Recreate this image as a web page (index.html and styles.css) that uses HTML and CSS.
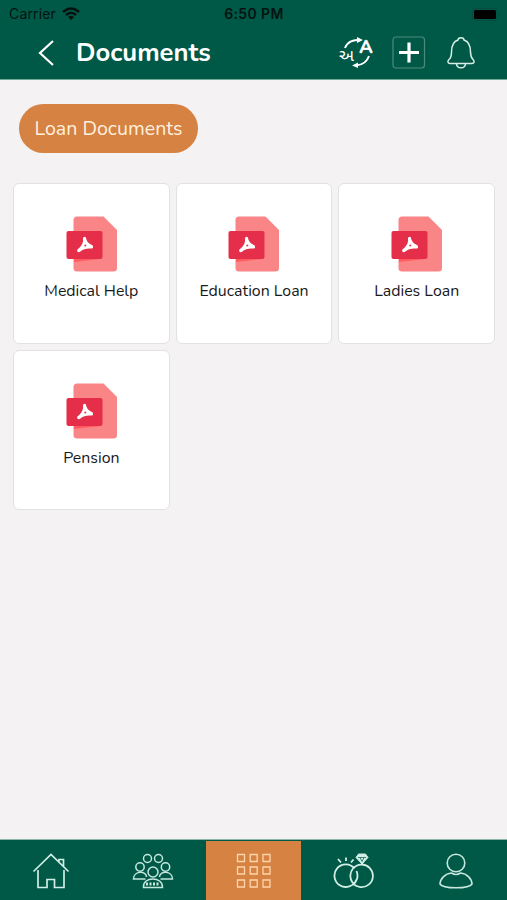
FILE: index.html
```html
<!DOCTYPE html>
<html lang="en">
<head>
<meta charset="utf-8">
<title>Documents</title>
<link rel="stylesheet" href="styles.css">
</head>
<body>
<svg class="defs" width="0" height="0" aria-hidden="true">
  <symbol id="pdf" viewBox="0 0 52 56">
    <path d="M11 .5H37.500L51 14V52Q51 55.500 47.500 55.500H11Q7.500 55.500 7.500 52V4Q7.500 .5 11 .5Z" fill="#fa8587"/>
    <path d="M8 43H34L8 46Z" fill="#ff5b60"/>
    <rect x=".5" y="15" width="36" height="28" rx="2" fill="#e52f4a"/>
    <path d="M18.500 22.500C19.500 26 17.500 31 12.700 34.500M18.500 22.500C19 26 21.500 29 25.300 30.500M13 34.500C16 32 21 30.500 25.500 31" fill="none" stroke="#fff" stroke-width="3.200" stroke-linecap="round" stroke-linejoin="round"/>
    <circle cx="19.200" cy="29.500" r=".9" fill="#e52f4a"/>
  </symbol>
</svg>
<header class="header">
  <div class="status">
    <div class="carrier"><span>Carrier</span>
      <svg width="18" height="14" viewBox="0 0 18 14" fill="none" stroke="#04130f" stroke-width="2.500"><path d="M1 5Q9-2 17 5M4 8Q9 3.500 14 8"/><path d="M9 13L6 10Q9 7.500 12 10Z" fill="#04130f" stroke="none"/></svg>
    </div>
    <div class="clock">6:50 PM</div>
    <div class="battery"><svg width="29" height="13" viewBox="0 0 29 13"><rect x=".5" y=".5" width="25" height="12" rx="3" fill="none" stroke="#064b3e"/><rect x="2" y="2" width="22" height="9" rx="1.500"/><path d="M27 4.500Q29 6.500 27 8.500Z" fill="#06463a"/></svg></div>
  </div>
  <div class="toolbar">
    <svg class="back" width="18" height="28" viewBox="0 0 18 28" fill="none" stroke="#fff" stroke-width="2.200"><path d="M17 2L4 14L17 26"/></svg>
    <h1>Documents</h1>
    <div class="actions">
      <svg width="36" height="34" viewBox="0 0 36 34"><path d="M7 12C9 6 15 3.500 21 4M31 20C29 26 24 29 18 29.500" fill="none" stroke="#fff" stroke-width="1.900"/><path d="M19 1L25 4L19 7ZM20 26.500L14 29.500L20 32Z" fill="#fff"/><text class="latin" x="21.300" y="16.500">A</text><text class="gujarati" x="1" y="25">અ</text></svg>
      <svg class="add" width="34" height="34" viewBox="0 0 34 34" fill="none"><rect x="1" y="1" width="31.500" height="31" rx="3" stroke="#4b8b7c" stroke-width="1.200"/><path d="M17 6.500V26.500M7 16.500H27" stroke="#fff" stroke-width="3.200"/></svg>
      <svg width="30" height="34" viewBox="0 0 30 34" fill="none" stroke="#d6eee6" stroke-width="1.500"><path d="M12 4C12 1 18 1 18 4C23 5.500 24.500 10 24.500 16C24.500 20 25.500 22 27 23.500C29 25.500 28 27.500 26 27.500H4C2 27.500 1 25.500 3 23.500C5 22 5.500 20 5.500 16C5.500 10 7 5.500 12 4ZM10.500 28C11 33 19 33 19.500 28"/></svg>
    </div>
  </div>
</header>
<main class="content">
  <button class="chip">Loan Documents</button>
  <section class="grid">
    <article class="card"><svg class="file"><use href="#pdf"/></svg><span>Medical Help</span></article>
    <article class="card"><svg class="file"><use href="#pdf"/></svg><span>Education Loan</span></article>
    <article class="card"><svg class="file"><use href="#pdf"/></svg><span>Ladies Loan</span></article>
    <article class="card"><svg class="file"><use href="#pdf"/></svg><span>Pension</span></article>
  </section>
</main>
<nav class="tabs">
  <a class="tab"><svg width="38" height="36" viewBox="0 0 38 36" fill="none" stroke="#d0eee5" stroke-width="1.700"><path d="M1.500 18.500L19 1.500L36.500 18.500M6 17V34.500H15V26.500H22.500V34.500H32V17M27 8.500V6.500H31.500V13.500"/></svg></a>
  <a class="tab"><svg width="42" height="36" viewBox="0 0 42 36" fill="none" stroke="#c5e7dd" stroke-width="1.500"><circle cx="15.500" cy="5.500" r="4"/><circle cx="26.500" cy="5.500" r="4"/><circle cx="8" cy="14" r="4.200"/><circle cx="33.500" cy="14" r="4.200"/><circle cx="21" cy="19" r="5"/><path d="M13.500 26H1.500C1.500 17.500 14.500 17.500 14.500 24M28.500 26H40.500C40.500 17.500 27.500 17.500 27.500 24M11.500 34.500C10.500 23 31 23 30.500 34.500Z"/><path d="M14 31H28" stroke-dasharray="2 1.500" stroke-width="3"/></svg></a>
  <a class="tab active"><svg width="36" height="36" viewBox="0 0 36 36" fill="none" stroke="#ffd5ab" stroke-width="1.300"><path d="M1.500 1.500H8.500V8.500H1.500ZM14.200 1.500H21.200V8.500H14.200ZM27 1.500H34V8.500H27ZM1.500 14H8.500V21H1.500ZM14.200 14H21.200V21H14.200ZM27 14H34V21H27ZM1.500 27H8.500V34H1.500ZM14.200 27H21.200V34H14.200ZM27 27H34V34H27Z"/></svg></a>
  <a class="tab"><svg width="42" height="36" viewBox="0 0 42 36" fill="none" stroke="#d0eee5" stroke-width="1.800"><path d="M21.500 15.500A11.300 11.300 0 1 0 23.200 27M19.500 29.500A11.300 11.300 0 1 0 20 15.500M23.500 18A11.300 11.300 0 0 1 19.500 32M20 15.500A11.300 11.300 0 0 0 19.500 29.500M5 6L8 9.500M13 4.500V8M20.500 6.500L18 9.500"/><path d="M25.500 1H32.500L35 4.500L29 11L23 4.500Z" fill="#d0eee5" stroke-width="1"/><path d="M25 4.500H33M27 4.500L29 8.500L31 4.500" stroke="#005847" stroke-width=".7"/></svg></a>
  <a class="tab"><svg width="34" height="36" viewBox="0 0 34 36" fill="none" stroke="#c5e7dd" stroke-width="1.600"><circle cx="17" cy="10" r="8.800"/><path d="M12.500 20C6 20.500 1 26 1 31C4 36 30 36 33 31C33 26 28 20.500 21.500 20Q17 23 12.500 20Z"/></svg></a>
</nav>
</body>
</html>
```
FILE: styles.css
```css
* { box-sizing: border-box; }
body { margin: 0; width: 507px; height: 900px; display: flex; flex-direction: column; background: #f4f2f3; font-family: Nunito, Lato, sans-serif; color: #17191a; overflow: hidden; }
.defs { position: absolute; }
svg { display: block; flex: none; }
.header { height: 80px; flex: none; background: #005847; border-bottom: 1px solid #72a79a; }
.status { height: 28px; display: grid; grid-template-columns: 1fr 1fr 1fr; align-items: center; padding: 0 6px 0 9px; color: #04130f; font: 14px/28px Inter, sans-serif; }
.carrier { display: flex; align-items: center; gap: 6px; letter-spacing: .15px; }
.clock { text-align: center; font-weight: 600; letter-spacing: .4px; margin-left: -2px; }
.battery { display: flex; justify-content: flex-end; }
.toolbar { height: 51px; padding: 0 31px 2px 36px; display: flex; align-items: center; }
h1 { margin: 1px 0 0 22px; color: #fff; font-size: 25.6px; line-height: 32px; font-weight: 700; }
.actions { margin-left: auto; display: flex; align-items: center; gap: 19px; }
.add { margin: 0 1px 0 -1px; }
.latin { font: 700 18px Nunito, Lato, sans-serif; fill: #fff; stroke: #fff; stroke-width: .5px; }
.gujarati { font: 17px "Noto Sans Gujarati", "Noto Sans", sans-serif; fill: #fff; }
.content { flex: 1; padding: 24px 12px 0 13px; }
.chip { display: block; width: 179px; height: 49px; margin: 0 0 30px 6px; padding: 0; border: 0; border-radius: 25px; background: #d58242; color: #fff0df; font: 19.6px Nunito, Lato, sans-serif; }
.grid { display: grid; grid-template-columns: repeat(3, 1fr); grid-auto-rows: 160.5px; gap: 6px; }
.card { border: 1px solid #e3e1e2; border-radius: 6px; background: #fff; display: flex; flex-direction: column; align-items: center; padding-top: 32px; font-size: 15.9px; line-height: 22px; }
.file { width: 52px; height: 56px; margin: 0 0 8px 1px; }
.tabs { height: 61px; flex: none; padding-top: 1px; border-top: 1px solid #8eb5ab; background: #005847; display: grid; grid-template-columns: 102px 104px 95px 106px 100px; }
.tab { display: flex; align-items: center; justify-content: center; }
.tab:nth-child(2) { padding-right: 2px; }
.tab:last-child { padding-right: 2px; }
.active { background: #d58242; }
```
